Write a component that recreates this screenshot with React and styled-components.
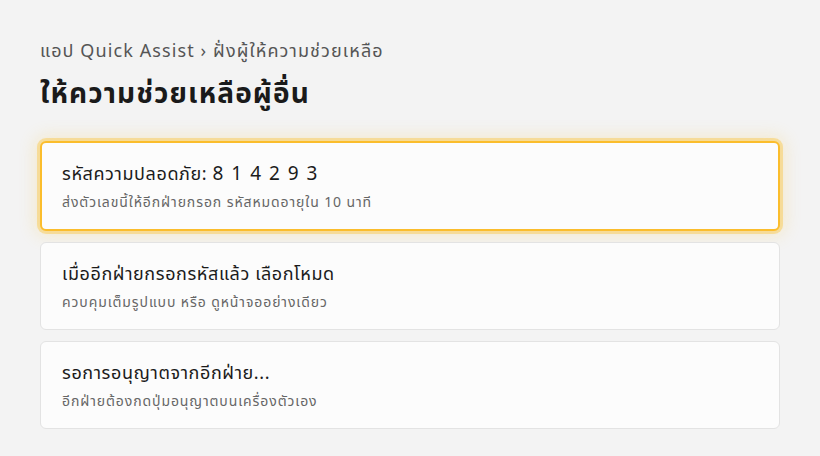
import React from 'react'
import styled, { createGlobalStyle } from 'styled-components'

const GlobalStyle = createGlobalStyle`
  body {
    margin: 0;
    background: #f3f3f3;
    font-family: "Noto Sans", "Noto Sans Thai", sans-serif;
  }
`

const Page = styled.div`
  padding: 37px 40px 20px 40px;
`

const Crumb = styled.div`
  font-size: 18px;
  letter-spacing: 1.1px;
  color: #555;
  line-height: 26px;
`

const Title = styled.h1`
  margin: 11px 0 31px 0;
  font-size: 28px;
  letter-spacing: 1.1px;
  font-weight: 700;
  color: #1a1a1a;
  line-height: 36px;
`

const List = styled.div`
  display: flex;
  flex-direction: column;
  gap: 11px;
`

const Card = styled.div`
  background: #fcfcfc;
  border: ${p => (p.active ? '2px solid #fbbd2c' : '1px solid #e3e3e3')};
  border-radius: 6px;
  padding: ${p => (p.active ? '17px 20px 17px' : '17px 21px 17px')};
  box-shadow: ${p =>
    p.active
      ? '0 0 0 3px rgba(251, 200, 70, 0.45), 0 0 16px 5px rgba(251, 200, 70, 0.22)'
      : 'none'};
`

const CardTitle = styled.div`
  font-size: 18px;
  letter-spacing: 0.6px;
  color: #1b1b1b;
  line-height: 26px;
`

const Code = styled.span`
  font-size: 19px;
  letter-spacing: 1.5px;
`

const CardSub = styled.div`
  margin-top: 6px;
  font-size: 14px;
  letter-spacing: 0.9px;
  color: #666;
  line-height: 20px;
`

const steps = [
  { title: 'เมื่ออีกฝ่ายกรอกรหัสแล้ว เลือกโหมด', sub: 'ควบคุมเต็มรูปแบบ หรือ ดูหน้าจออย่างเดียว' },
  { title: 'รอการอนุญาตจากอีกฝ่าย...', sub: 'อีกฝ่ายต้องกดปุ่มอนุญาตบนเครื่องตัวเอง' },
]

export default function App() {
  return (
    <Page>
      <GlobalStyle />
      <Crumb>แอป Quick Assist › ฝั่งผู้ให้ความช่วยเหลือ</Crumb>
      <Title>ให้ความช่วยเหลือผู้อื่น</Title>
      <List>
        <Card active>
          <CardTitle>
            รหัสความปลอดภัย: <Code>8 1 4 2 9 3</Code>
          </CardTitle>
          <CardSub>ส่งตัวเลขนี้ให้อีกฝ่ายกรอก รหัสหมดอายุใน 10 นาที</CardSub>
        </Card>
        {steps.map(s => (
          <Card key={s.title}>
            <CardTitle>{s.title}</CardTitle>
            <CardSub>{s.sub}</CardSub>
          </Card>
        ))}
      </List>
    </Page>
  )
}
